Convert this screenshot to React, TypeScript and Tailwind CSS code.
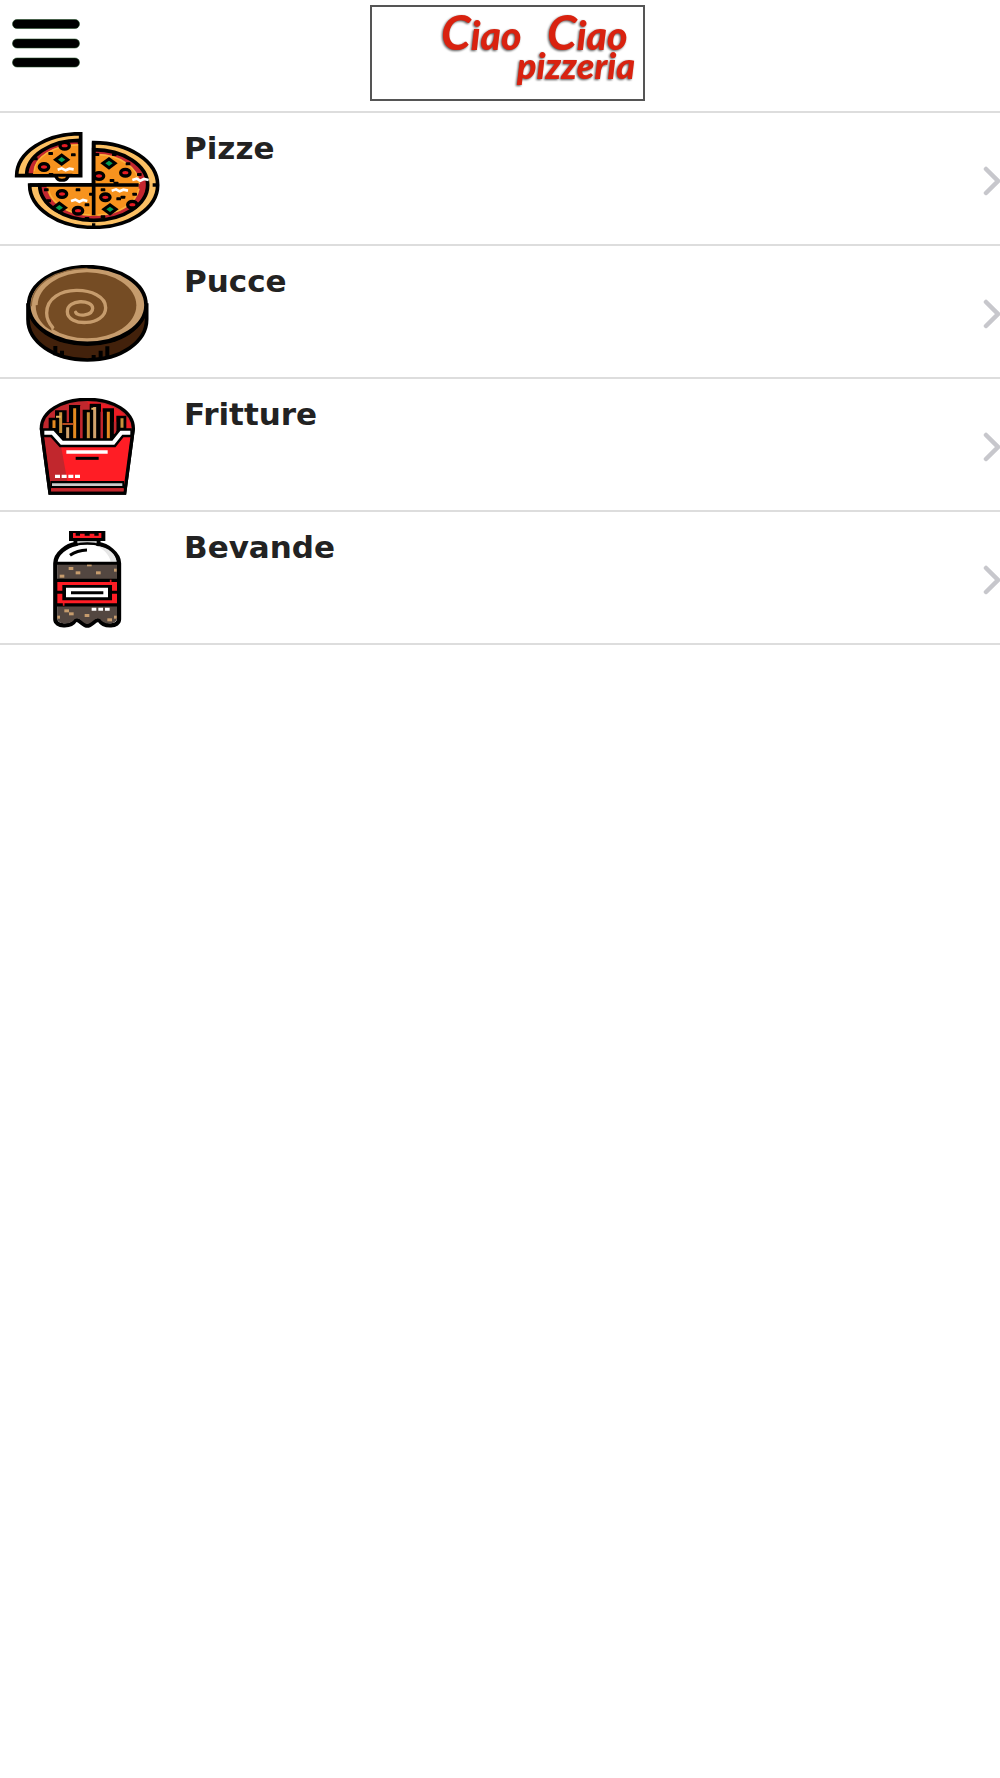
import React from "react";

function MenuIcon() {
  return (
    <svg width="70" height="52" viewBox="0 0 70 52" aria-hidden="true">
      <g fill="#000" stroke="#1d4a22" strokeOpacity="0.55" strokeWidth="1">
        <rect x="0.5" y="1.5" width="67" height="9" rx="4.5" />
        <rect x="0.5" y="21" width="67" height="9" rx="4.5" />
        <rect x="0.5" y="40" width="67" height="9" rx="4.5" />
      </g>
    </svg>
  );
}

function Logo() {
  return (
    <svg
      width="271"
      height="92"
      viewBox="372 7 271 92"
      role="img"
      aria-label="Ciao Ciao pizzeria"
      className="block overflow-visible [filter:drop-shadow(-1px_1px_1px_#555)]"
      fontFamily="Lato, 'Open Sans', sans-serif"
      fontStyle="italic"
      fontWeight="900"
      fill="#d9220f"
    >
      <text x="441" y="50" fontSize="39">
        <tspan fontSize="48" fontWeight="700">C</tspan>iao
      </text>
      <text x="547" y="50" fontSize="39">
        <tspan fontSize="48" fontWeight="700">C</tspan>iao
      </text>
      <text x="517" y="79" fontSize="36">pizzeria</text>
    </svg>
  );
}

const olives = [[194, 107], [132, 171], [297, 198], [376, 188], [186, 252], [234, 302], [316, 262], [397, 284]];
const peppers = [[185, 149], [327, 160], [178, 293], [330, 298]];
const crumbs = [
  [152, 130], [220, 134], [106, 146], [153, 193], [291, 133], [343, 133], [384, 161], [418, 193],
  [336, 211], [348, 219], [139, 239], [234, 239], [146, 272], [261, 284], [274, 252], [309, 239],
  [356, 266], [369, 261], [404, 252], [309, 320], [261, 325],
];

function PizzaIcon() {
  return (
    <svg className="block h-full w-full" viewBox="42 66 438 291" aria-hidden="true">
      <path d="M242 71V197H50A192 126 0 0 1 242 71Z" fill="#fcc063" stroke="#000" strokeWidth="11" />
      <path d="M239 91V195H80A159 104 0 0 1 239 91Z" fill="#c3272f" stroke="#000" strokeWidth="11" />
      <path d="M235 102V192H99A136 90 0 0 1 235 102Z" fill="#f7931e" />
      <path d="M103 184A134 80 0 0 1 234 105" fill="none" stroke="#fbb03b" strokeWidth="4" />
      <path d="M165 196C171 202 168 211 186 211S201 202 207 196Z" fill="#f7931e" stroke="#000" strokeWidth="9" />
      <path d="M281 98A192 127 0 1 1 89 225H281Z" fill="#fcc063" stroke="#000" strokeWidth="11" />
      <path d="M281 119A162 106 0 1 1 119 225H281Z" fill="#c3272f" stroke="#000" strokeWidth="11" />
      <path d="M283 132A139 93 0 1 1 139 225H283Z" fill="#f7931e" />
      <path d="M291 134A129 91 0 0 1 418 222M417 236A129 91 0 0 1 292 315M272 315A129 91 0 0 1 145 239" fill="none" stroke="#fbb03b" strokeWidth="5" />
      <path d="M281 97V316M89 225H416" fill="none" stroke="#000" strokeWidth="11" />
      <path d="M281 340V355M458 225H474" fill="none" stroke="#000" strokeWidth="10" />
      {crumbs.map(([x, y], i) => (
        <rect key={i} x={x - 7} y={y - 4} width="14" height="9" rx="2" fill="#000" />
      ))}
      {olives.map(([x, y], i) => (
        <ellipse key={i} cx={x} cy={y} rx="14" ry="10" fill="#e51b23" stroke="#000" strokeWidth="10" />
      ))}
      {peppers.map(([x, y], i) => (
        <g key={i}>
          <path d={`M${x - 26} ${y}L${x} ${y - 19}L${x + 26} ${y}L${x} ${y + 19}Z`} fill="#000" />
          <path d={`M${x - 11} ${y}L${x} ${y - 8}L${x + 11} ${y}L${x} ${y + 8}Z`} fill="#079b50" />
        </g>
      ))}
      <path
        d="M173 179L185 175L197 181L208 176L221 178M213 273L226 269L238 275L249 270L262 273M335 242L348 238L359 244L370 239L384 242M397 210L410 206L421 212L432 207L446 210"
        fill="none"
        stroke="#fff"
        strokeWidth="8"
      />
    </svg>
  );
}

function BreadIcon() {
  return (
    <svg className="block h-full w-full" viewBox="42 60 438 291" aria-hidden="true">
      <path d="M84 180V223C84 290 160 345 262 345S440 290 440 223V180Z" fill="#42210b" stroke="#000" strokeWidth="11" />
      <ellipse cx="262" cy="184" rx="180" ry="119" fill="#000" />
      <ellipse cx="262" cy="180" rx="176" ry="115" fill="#c69c6d" stroke="#000" strokeWidth="11" />
      <path d="M94 184C94 118 166 70 262 70" fill="none" stroke="#8c653c" strokeWidth="4" />
      <ellipse cx="261" cy="181" rx="148" ry="99" fill="#754c24" />
      <path d="M107 181C107 218 130 245 155 257L151 243C129 231 115 205 115 180Z" fill="#754c24" />
      <path
        d="M227 202C232 216 278 213 278 190C278 163 202 161 202 200C202 246 317 244 317 188C317 121 140 112 140 204C140 222 147 235 158 247"
        fill="none"
        stroke="#c69c6d"
        strokeWidth="10"
        strokeLinecap="round"
      />
      <path d="M166 303V331M186 317V337M281 330V346M302 317V343M322 304V340" stroke="#000" strokeWidth="12" />
    </svg>
  );
}

function FriesIcon() {
  return (
    <svg className="block h-full w-full" viewBox="42 69 438 291" aria-hidden="true">
      <path d="M124 160C124 111 184 73 262 73S400 111 400 160L374 354H150Z" fill="#c1272d" stroke="#000" strokeWidth="10" />
      <path d="M262 80C335 82 391 116 394 160H300Z" fill="#ed1c24" />
      <path
        d="M146 164V128H165V106H200V142H207V90H241V192H247V104H269V86H303V191H308V100H342V168H349V122H379V165L344 198H184Z"
        fill="#000"
      />
      <path d="M244 92V192M305 110V192M345 140V178" stroke="#c1272d" strokeWidth="7" />
      <g strokeWidth="9" fill="none">
        <path d="M162 136V159M224 100V191M325 110V191" stroke="#e58a20" />
        <path d="M182 112V174M265 112V191M366 130V158" stroke="#c9913b" />
        <path d="M203 157V191M284 96V191" stroke="#d1a36c" />
        <path d="M168 125H182M274 101H284" stroke="#e8b465" strokeWidth="6" />
        <path d="M187 147H220" stroke="#b64b20" strokeWidth="6" />
      </g>
      <path d="M132 182H151L180 212H345L374 182H393L372 349H153Z" fill="#ff1d25" />
      <path d="M132 182H151L183 213L202 319H151Z" fill="#c1272d" />
      <path d="M129 173H158L185 203H340L364 173H394" fill="none" stroke="#000" strokeWidth="27" />
      <path d="M133 173H158L185 203H340L364 173H391" fill="none" stroke="#fff" strokeWidth="12" />
      <path d="M124 160L150 354H374L400 160" fill="none" stroke="#000" strokeWidth="10" />
      <path d="M199 231H323" stroke="#fff" strokeWidth="10" />
      <path d="M227 250H296" stroke="#000" strokeWidth="9" />
      <path d="M165 304H242" stroke="#fff" strokeWidth="10" strokeDasharray="15 5" />
      <path d="M151 329H372" stroke="#000" strokeWidth="22" />
      <path d="M153 345H371" stroke="#c1272d" strokeWidth="9" />
      <path d="M156 329H367" stroke="#ccc" strokeWidth="8" />
    </svg>
  );
}

const bubbles = [
  [213, 175], [234, 188], [186, 198], [295, 188], [268, 168], [346, 180],
  [200, 302], [214, 311], [261, 316], [329, 329], [176, 321], [346, 321],
];

function BottleIcon() {
  return (
    <svg className="block h-full w-full" viewBox="42 63 438 291" aria-hidden="true">
      <path
        d="M166 160C166 130 202 106 227 102V92H295V102C320 106 357 130 357 160V328C357 350 313 354 298 330C286 325 276 347 262 347S238 325 226 330C212 354 166 350 166 328Z"
        fill="#fff"
        stroke="#000"
        strokeWidth="13"
      />
      <path d="M172 160H351V326C347 345 309 345 301 328C285 318 276 342 262 342S240 318 223 328C215 345 175 345 172 326Z" fill="#534741" />
      <path d="M289 107C330 112 349 135 349 155H332C329 135 311 117 289 107Z" fill="#e6e6e6" />
      <path d="M232 96H290" stroke="#bbb" strokeWidth="7" />
      <path d="M224 105C245 99 279 99 299 105" fill="none" stroke="#000" strokeWidth="7" />
      <path d="M207 62H316V93H207Z" fill="#000" />
      <path d="M219 69H227V77H240V71H254V77H269V71H283V77H296V69H304V84H219Z" fill="#ff1d25" />
      <path d="M210 136Q231 121 261 120" fill="none" stroke="#000" strokeWidth="9" />
      <path d="M166 160H357" stroke="#000" strokeWidth="9" />
      <path d="M166 248H357" stroke="#000" strokeWidth="83" />
      <path d="M172 216H351V280H172Z" fill="#ff1d25" />
      <path d="M166 247H357" stroke="#000" strokeWidth="9" />
      <path d="M187 225H336V271H187Z" fill="#000" />
      <path d="M198 233H324V262H198Z" fill="#fff" />
      <path d="M213 248H310" stroke="#000" strokeWidth="9" />
      <path d="M332 209V217M191 279V287" stroke="#e51b23" strokeWidth="5" />
      {bubbles.map(([x, y], i) => (
        <rect
          key={i}
          x={x - (x === 176 || x === 346 ? 4 : 7)}
          y={y - 4}
          width={x === 176 || x === 346 ? 8 : 14}
          height={y === 168 ? 5 : 9}
          fill="#c69c6d"
        />
      ))}
      <path d="M275 298H330" stroke="#fff" strokeWidth="9" strokeDasharray="14 6" />
    </svg>
  );
}

const categories = [
  { name: "Pizze", Icon: PizzaIcon },
  { name: "Pucce", Icon: BreadIcon },
  { name: "Fritture", Icon: FriesIcon },
  { name: "Bevande", Icon: BottleIcon },
];

export default function App() {
  return (
    <div className="min-h-screen bg-white font-['DejaVu_Sans',sans-serif] text-[#222]">
      <header className="grid grid-cols-[1fr_auto_1fr] items-start border-b-2 border-[#ddd] pt-[5px] pb-[10px]">
        <button type="button" aria-label="Menu" className="ml-3 mt-[13px] justify-self-start">
          <MenuIcon />
        </button>
        <a href="#home" className="ml-[15px] block border-2 border-[#555]">
          <Logo />
        </a>
      </header>
      <main>
        <ul>
          {categories.map(({ name, Icon }) => (
            <li key={name} className="border-b-2 border-[#ddd]">
              <a href={`#${name.toLowerCase()}`} className="flex items-start pl-[14px] pb-[15px]">
                <span className="mt-[19px] h-[97px] w-[146px] shrink-0">
                  <Icon />
                </span>
                <h2 className="ml-6 mt-[15px] flex-1 text-[31px] leading-[40px] font-bold">{name}</h2>
                <svg className="mt-[53px] shrink-0" width="17" height="30" viewBox="0 0 17 30" aria-hidden="true">
                  <path d="M3 3L15 15L3 27" fill="none" stroke="#c7c7cc" strokeWidth="4.5" strokeLinecap="round" />
                </svg>
              </a>
            </li>
          ))}
        </ul>
      </main>
    </div>
  );
}
